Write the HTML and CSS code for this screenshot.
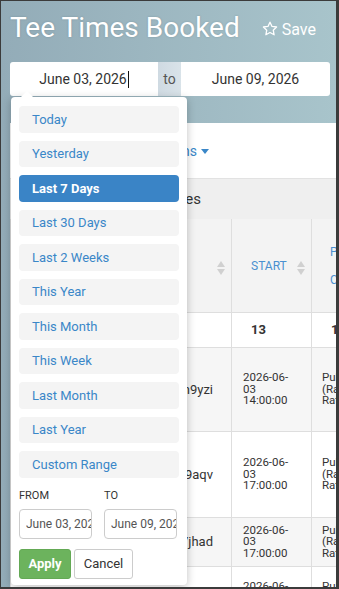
FILE: index.html
```html
<!DOCTYPE html>
<html lang="en">
<head>
    <meta charset="UTF-8">
    <meta name="viewport" content="width=device-width, initial-scale=1.0">
    <title>Tee Times Booked</title>
    <link rel="stylesheet" href="styles.css">
</head>
<body>
<div class="screen">
    <header class="page-head">
        <div class="title-row">
            <h1>Tee Times Booked</h1>
            <a class="save" href="#">
                <svg width="16" height="15" viewBox="0 0 24 23" fill="none" stroke="#fff" stroke-width="2" stroke-linejoin="round">
                    <path d="M12 1.8l3.1 6.5 7 .9-5.1 4.9 1.3 7-6.3-3.4-6.3 3.4 1.3-7-5.1-4.9 7-.9z"/>
                </svg>
                Save
            </a>
        </div>
        <div class="range-bar">
            <div class="range-input">June 03, 2026<span class="caret"></span></div>
            <span class="range-to">to</span>
            <div class="range-input">June 09, 2026</div>
        </div>
    </header>

    <main class="panel">
        <div class="toolbar">
            <span class="columns">Columns</span>
        </div>
        <div class="summary">Booked tee times</div>
        <table class="grid">
            <colgroup>
                <col class="c-code">
                <col class="c-start">
                <col class="c-type">
                <col class="c-more">
            </colgroup>
            <thead>
                <tr>
                    <th class="sortable">Booking</th>
                    <th class="sortable">Start</th>
                    <th class="wrap">Players Count</th>
                    <th>Status</th>
                </tr>
            </thead>
            <tbody>
                <tr class="totals">
                    <td></td>
                    <td>13</td>
                    <td>1</td>
                    <td></td>
                </tr>
                <tr class="odd h84">
                    <td class="code">tt-4kd2n9yzi</td>
                    <td>2026-06-<wbr>03 14:00:00</td>
                    <td>Public (Rack Rate)</td>
                    <td>Paid</td>
                </tr>
                <tr class="h86">
                    <td class="code">tt-8wq1v9aqv</td>
                    <td>2026-06-<wbr>03 17:00:00</td>
                    <td>Public (Rack Rate)</td>
                    <td>Paid</td>
                </tr>
                <tr class="odd h49">
                    <td class="code">tt-3rb57jhad</td>
                    <td>2026-06-<wbr>03 17:00:00</td>
                    <td>Public (Rack Rate)</td>
                    <td>Paid</td>
                </tr>
                <tr class="h62">
                    <td class="code">tt-6mx0p2kle</td>
                    <td>2026-06-<wbr>04 08:30:00</td>
                    <td>Public (Rack Rate)</td>
                    <td>Paid</td>
                </tr>
            </tbody>
        </table>
    </main>

    <div class="picker">
        <ul class="ranges">
            <li>Today</li>
            <li>Yesterday</li>
            <li class="active">Last 7 Days</li>
            <li>Last 30 Days</li>
            <li>Last 2 Weeks</li>
            <li>This Year</li>
            <li>This Month</li>
            <li>This Week</li>
            <li>Last Month</li>
            <li>Last Year</li>
            <li>Custom Range</li>
        </ul>
        <div class="custom">
            <label>FROM<input type="text" value="June 03, 2026"></label>
            <label>TO<input type="text" value="June 09, 2026"></label>
        </div>
        <div class="actions">
            <button class="apply">Apply</button>
            <button class="cancel">Cancel</button>
        </div>
    </div>
</div>
</body>
</html>
```

FILE: styles.css
```css
html, body {
    margin: 0;
    padding: 0;
}

body {
    font-family: Roboto, "Liberation Sans", sans-serif;
    color: #333;
}

.screen {
    position: relative;
    box-sizing: border-box;
    height: 589px;
    overflow: hidden;
    border: 1px solid #3b3b3b;
    border-right-width: 3px;
    border-bottom-width: 2px;
    background: linear-gradient(90deg, #93acb8, #a8c4cb);
}

.page-head {
    padding: 11px 0 0 9px;
}

.title-row {
    display: flex;
    align-items: baseline;
    gap: 22px;
}

h1 {
    margin: 0;
    font-size: 28px;
    line-height: 32px;
    font-weight: 400;
    color: #fff;
    text-shadow: 0 0 2px rgba(60, 80, 90, 0.3);
}

.save {
    display: flex;
    align-items: center;
    gap: 4px;
    color: #fff;
    font-size: 16px;
    text-decoration: none;
}

.save svg {
    position: relative;
    top: -1px;
}

.range-bar {
    display: flex;
    width: 320px;
    height: 34px;
    margin-top: 18px;
    background: #fff;
    border-radius: 3px;
    overflow: hidden;
}

.range-input {
    display: flex;
    align-items: center;
    justify-content: center;
    width: 148px;
    font-size: 14px;
    color: #333;
}

.range-input + .range-to + .range-input {
    width: 149px;
}

.caret {
    display: inline-block;
    width: 1px;
    height: 17px;
    margin-left: 1px;
    background: #111;
}

.range-to {
    display: flex;
    align-items: center;
    justify-content: center;
    width: 23px;
    background: linear-gradient(90deg, #cfdae2, #d9e3e9);
    color: #555;
    font-size: 14px;
}

.panel {
    margin: 27px 0 0 9px;
    height: 470px;
    background: #fff;
    overflow: hidden;
}

.toolbar {
    display: flex;
    align-items: center;
    justify-content: flex-end;
    height: 55px;
    padding-right: 127px;
}

.columns {
    color: #3a87c8;
    font-size: 14px;
}

.columns::after {
    content: "";
    display: inline-block;
    margin-left: 4px;
    vertical-align: middle;
    border-top: 5px solid #3a87c8;
    border-left: 4px solid transparent;
    border-right: 4px solid transparent;
}

.summary {
    display: flex;
    align-items: center;
    justify-content: flex-end;
    box-sizing: border-box;
    height: 41px;
    padding-right: 135px;
    background: #efefef;
    border-top: 1px solid #e2e2e2;
    font-size: 15px;
}

.grid {
    border-collapse: collapse;
    table-layout: fixed;
    width: 481px;
    font-size: 11.5px;
}

.c-code { width: 221px; }
.c-start { width: 80px; }
.c-type { width: 80px; }
.c-more { width: 100px; }

.grid th,
.grid td {
    border: 1px solid #dedede;
    border-top: 0;
    padding: 0 10px 0 11px;
    vertical-align: middle;
    text-align: left;
}

.grid td + td + td {
    padding-left: 10px;
}

.grid th {
    position: relative;
    height: 93px;
    padding-left: 19px;
    background: #f3f3f3;
    color: #4a90d0;
    font-size: 12px;
    font-weight: 400;
    text-transform: uppercase;
}

.grid th:first-child {
    color: transparent;
}

.grid th.wrap {
    padding-left: 18px;
    line-height: 28px;
}

.sortable::before,
.sortable::after {
    content: "";
    position: absolute;
    right: 6px;
    border-left: 4px solid transparent;
    border-right: 4px solid transparent;
}

.sortable::before {
    top: 42px;
    border-bottom: 6px solid #d0d0d0;
}

.sortable::after {
    top: 50px;
    border-top: 6px solid #d0d0d0;
}

.grid td {
    line-height: 11.5px;
}

.grid .totals td {
    height: 34px;
    padding-left: 19px;
    font-weight: 700;
    font-size: 13px;
}

.grid .odd td {
    background: #f6f6f6;
}

.h84 td { height: 83px; }
.h86 td { height: 85px; }
.h49 td { height: 48px; }
.h62 td { height: 62px; }

.grid td.code {
    text-align: right;
    padding-right: 18px;
    font-size: 13px;
}

.picker {
    position: absolute;
    left: 10px;
    top: 96px;
    box-sizing: border-box;
    width: 176px;
    height: 488px;
    padding: 9px 8px 0;
    background: #fff;
    border-radius: 4px;
    box-shadow: 0 2px 8px rgba(0, 0, 0, 0.25);
}

.picker::before {
    content: "";
    position: absolute;
    top: -6px;
    left: 10px;
    border-bottom: 6px solid #fff;
    border-left: 6px solid transparent;
    border-right: 6px solid transparent;
}

.ranges {
    list-style: none;
    margin: 0;
    padding: 0;
    display: flex;
    flex-direction: column;
    gap: 8px;
}

.ranges li {
    display: flex;
    align-items: center;
    box-sizing: border-box;
    height: 26.5px;
    padding-left: 13px;
    background: #f4f4f4;
    border-radius: 4px;
    color: #3a87c8;
    font-size: 13px;
}

.ranges li.active {
    background: #3a84c6;
    color: #fff;
    font-weight: 700;
}

.custom {
    display: flex;
    gap: 12px;
    margin-top: 11px;
}

.custom label {
    display: flex;
    flex-direction: column;
    gap: 6px;
    font-size: 11px;
    line-height: 14px;
    color: #333;
}

.custom input {
    box-sizing: border-box;
    width: 73px;
    height: 30px;
    padding: 0 0 0 6px;
    border: 1px solid #ccc;
    border-radius: 4px;
    font-family: inherit;
    font-size: 12px;
    color: #555;
}

.actions {
    display: flex;
    gap: 3px;
    margin-top: 10px;
}

.actions button {
    height: 30px;
    border-radius: 3px;
    font-family: inherit;
    font-size: 13px;
}

.apply {
    width: 52px;
    background: #6cb35d;
    border: 1px solid #64a955;
    color: #fff;
    font-weight: 700;
}

.cancel {
    width: 59px;
    background: #fff;
    border: 1px solid #ccc;
    color: #333;
}
```
